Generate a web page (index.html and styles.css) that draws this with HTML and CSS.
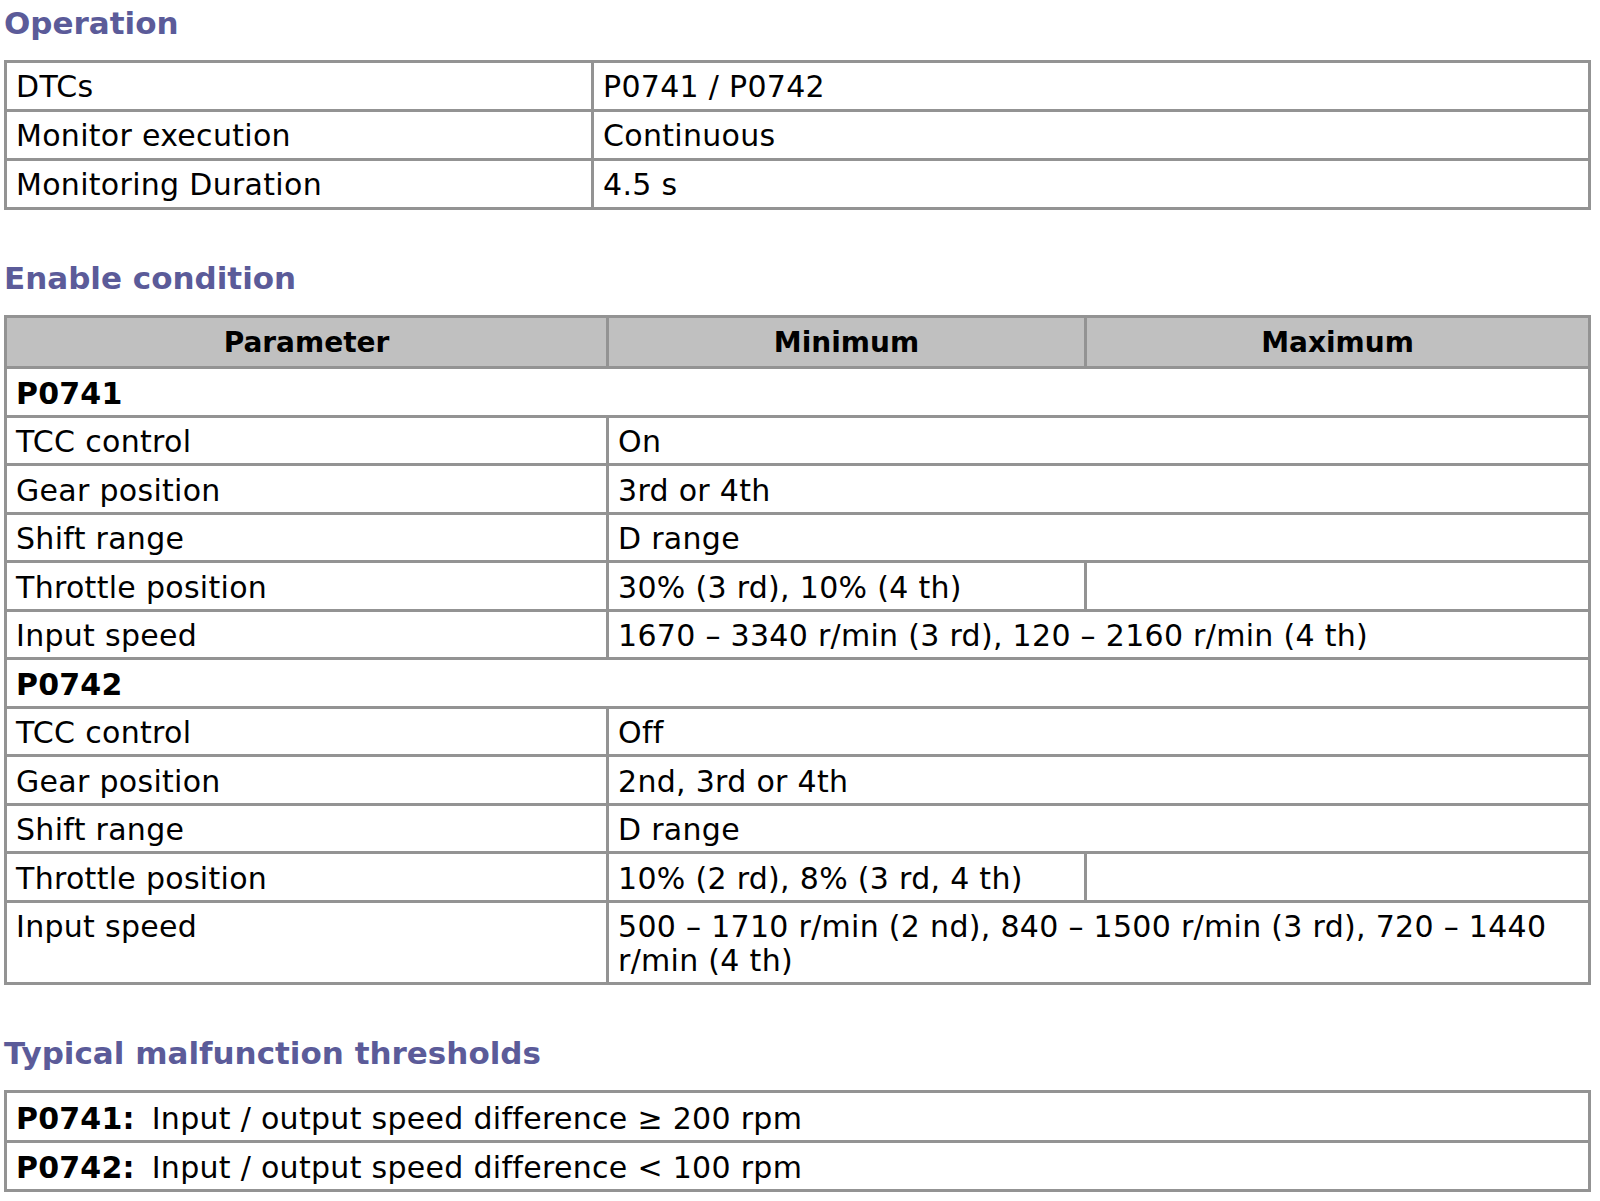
FILE: index.html
```html
<!DOCTYPE html>
<html>
<head>
<meta charset="utf-8">
<link rel="stylesheet" href="styles.css">
</head>
<body>
<div class="page">
  <h2 class="heading heading-first">Operation</h2>
  <table class="grid op">
    <colgroup><col class="op-c1"><col></colgroup>
    <tr><td>DTCs</td><td>P0741 / P0742</td></tr>
    <tr><td>Monitor execution</td><td>Continuous</td></tr>
    <tr><td>Monitoring Duration</td><td>4.5 s</td></tr>
  </table>

  <h2 class="heading">Enable condition</h2>
  <table class="grid en">
    <colgroup><col class="en-c1"><col class="en-c2"><col></colgroup>
    <tr class="head"><th>Parameter</th><th>Minimum</th><th>Maximum</th></tr>
    <tr><td colspan="3" class="sect">P0741</td></tr>
    <tr><td>TCC control</td><td colspan="2">On</td></tr>
    <tr><td>Gear position</td><td colspan="2">3rd or 4th</td></tr>
    <tr><td>Shift range</td><td colspan="2">D range</td></tr>
    <tr><td>Throttle position</td><td>30% (3 rd), 10% (4 th)</td><td></td></tr>
    <tr><td>Input speed</td><td colspan="2">1670 – 3340 r/min (3 rd), 120 – 2160 r/min (4 th)</td></tr>
    <tr><td colspan="3" class="sect">P0742</td></tr>
    <tr><td>TCC control</td><td colspan="2">Off</td></tr>
    <tr><td>Gear position</td><td colspan="2">2nd, 3rd or 4th</td></tr>
    <tr><td>Shift range</td><td colspan="2">D range</td></tr>
    <tr><td>Throttle position</td><td>10% (2 rd), 8% (3 rd, 4 th)</td><td></td></tr>
    <tr><td>Input speed</td><td colspan="2">500 – 1710 r/min (2 nd), 840 – 1500 r/min (3 rd), 720 – 1440 r/min (4 th)</td></tr>
  </table>

  <h2 class="heading">Typical malfunction thresholds</h2>
  <table class="grid th">
    <tr><td><b class="code">P0741:</b>Input / output speed difference ≥ 200 rpm</td></tr>
    <tr><td><b class="code">P0742:</b>Input / output speed difference &lt; 100 rpm</td></tr>
  </table>
</div>
</body>
</html>
```

FILE: styles.css
```css
html, body {
  margin: 0;
  padding: 0;
  background: #ffffff;
}

body {
  font-family: "DejaVu Sans", Verdana, sans-serif;
  font-size: 30px;
  color: #000000;
}

.page {
  padding: 0 0 0 4px;
  width: 1587px;
}

.heading {
  margin: 50px 0 19px 0;
  font-size: 31px;
  line-height: 36px;
  font-weight: bold;
  color: #5b5b99;
}

.heading-first {
  margin-top: 5px;
}

.grid {
  width: 1587px;
  border-collapse: collapse;
  table-layout: fixed;
  border: 3px solid #8e8e8e;
}

.grid td,
.grid th {
  border: 3px solid #939393;
  padding: 7px 8px 5px 9px;
  line-height: 34px;
  letter-spacing: 0.3px;
  text-align: left;
  vertical-align: top;
  font-weight: normal;
}

.op-c1 { width: 587px; }

.en-c1 { width: 602px; }
.en-c2 { width: 478px; }

.en td {
  padding-top: 7.5px;
  padding-bottom: 4px;
}

.grid .head th {
  background: #c0c0c0;
  font-size: 28px;
  font-weight: bold;
  text-align: center;
  letter-spacing: 0;
  padding: 8px 8px 6px 8px;
}

.grid td.sect {
  font-weight: bold;
  letter-spacing: 0.2px;
}

.th td {
  padding-top: 8px;
  padding-bottom: 4px;
}

.th tr:first-child td {
  padding-top: 9px;
}

.code {
  margin-right: 17px;
  letter-spacing: 0.2px;
}
```
